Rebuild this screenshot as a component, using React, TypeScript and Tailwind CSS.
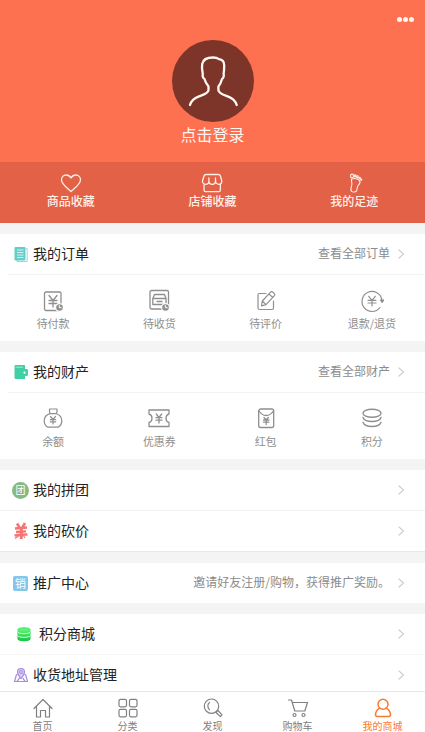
import type { ReactNode } from "react";

const line = { fill: "none", stroke: "currentColor", strokeLinecap: "round", strokeLinejoin: "round" } as const;

function Avatar() {
  return (
    <svg className="w-[82px] h-[82px]" viewBox="0 0 82 82" aria-hidden="true">
      <circle cx="41" cy="41" r="41" fill="#7d3529" />
      <path
        d="M18 65c1-4 4.500-7 9-8.700 4-1.500 9.500-2.700 9.500-6.300v-3.500c-1.500-1.800-3.200-4.500-4-7.500-1.400-.5-2.300-3.500-1.700-5-.8-3.500-1.200-7-.6-10 .8-4.500 5.300-6.500 10.800-6.500 2.300 0 4.500.5 6 1.700 3.300.4 5.200 2.600 5.200 6.100 0 3-.1 6-.6 8.700.7 1.500-.3 4.500-1.600 5-.8 3-2 5.700-3.600 7.500V50c0 3.600 5.300 4.800 9.300 6.300 4.500 1.700 8 4.700 9 8.700"
        {...line}
        stroke="#fff7f2"
        strokeWidth="2.300"
      />
    </svg>
  );
}

function Heart() {
  return (
    <svg className="w-6 h-5" viewBox="0 0 24 20" {...line} strokeWidth="1.300">
      <path d="M12 18.500C8 15 2.500 11.300 2.500 6.800c0-2.800 2-4.800 4.700-4.800 2 0 3.700 1.100 4.800 3 1.100-1.900 2.800-3 4.800-3 2.700 0 4.700 2 4.700 4.800 0 4.500-5.500 8.200-9.500 11.700z" />
    </svg>
  );
}

function Shop() {
  return (
    <svg className="w-6 h-5" viewBox="0 0 24 20" {...line} strokeWidth="1.300">
      <path d="M6 1.500h12.500c1 0 1.600.5 1.900 1.500l1.400 5c0 2-1.300 3.300-3 3.300s-3.300-1.300-3.300-3.300c0 2-1.500 3.300-3.300 3.300S8.900 10 8.900 8c0 2-1.600 3.300-3.300 3.300S2.500 10 2.500 8L4 3c.3-1 1-1.500 2-1.500zM8.900 5v3M15.500 5v3M4 12v5c0 1 .7 1.600 1.600 1.600h13.200c1 0 1.600-.6 1.600-1.600v-5" />
    </svg>
  );
}

function Foot() {
  return (
    <svg className="w-6 h-5" viewBox="0 0 24 20" {...line} strokeWidth="1.100">
      <path d="M9.300 6.200c2.500-1 6-.8 8.300 1.300 1.300 2.200 0 3.500-1.400 5-1.300 1.600-.8 3.300-1.500 5-.7 1.500-3.500 2-5 .9-1.600-1.400-.9-3.200-.2-5 .9-2.400.2-4.700-.2-7.200z" />
      <ellipse cx="10" cy="3" rx="1.500" ry="1.900" />
      <circle cx="13" cy="2.900" r="1" />
      <circle cx="15.400" cy="3.700" r=".9" />
      <circle cx="17.600" cy="5" r=".8" />
      <circle cx="19.200" cy="6.700" r=".6" />
    </svg>
  );
}

function Clock() {
  return (
    <>
      <circle cx="18.500" cy="18.500" r="3.900" fill="#8f8f8f" stroke="#fff" strokeWidth="1.200" />
      <path d="M18.300 16.500v2.200h2" stroke="#fff" strokeWidth="1" />
    </>
  );
}

function WaitPay() {
  return (
    <svg className="w-6 h-6" viewBox="0 0 24 24" {...line} strokeWidth="1.300">
      <rect x="3.500" y="3" width="16.500" height="18.500" rx="1.500" />
      <path d="M8 6.500l4 5 4-5M12 11.500V18M8 11.500h8M8 14.500h8" />
      <Clock />
    </svg>
  );
}

function WaitReceive() {
  return (
    <svg className="w-6 h-6" viewBox="0 0 24 24" {...line} strokeWidth="1.300">
      <rect x="3" y="1.500" width="18.500" height="18.500" rx="1.500" />
      <path d="M7.500 5.500h10l1.500 4v6H5.800v-6zM6 9.500h12.500M10 12.500h5" />
      <Clock />
    </svg>
  );
}

function Review() {
  return (
    <svg className="w-6 h-6" viewBox="0 0 24 24" {...line} strokeWidth="1.200">
      <path d="M12 4.500H5.500c-1 0-1.500.6-1.500 1.500v13c0 1 .6 1.500 1.500 1.500h12.500c1 0 1.500-.6 1.500-1.500v-7" />
      <path d="M8.300 12l8-8.600c.8-.8 1.800-.8 2.600-.1l1.300 1.100c.8.8.8 1.700 0 2.500l-8.200 8.700-4.500 1.200zM15 5l3.700 3.400M8.300 12l3.700 3.600" />
    </svg>
  );
}

function Refund() {
  return (
    <svg className="w-6 h-6" viewBox="0 0 24 24" {...line} strokeWidth="1.200">
      <path d="M20 18.500A10 10 0 1 1 21.900 11" />
      <path d="M20.500 11h3.300l-1.700 2.300z" fill="currentColor" />
      <path d="M8.700 7.300l3.300 4 3.300-4M12 11.300v5.700M8 11.300h8M8 14h8" />
    </svg>
  );
}

function MoneyBag() {
  return (
    <svg className="w-6 h-6" viewBox="0 0 24 24" {...line} strokeWidth="1.200">
      <path d="M8.500 2h7.500v2.500l-.7 2.200c3.200 1 5.500 3.700 5.500 7.200 0 2.700-1.300 4.800-3.200 6.200H6.500c-2-1.400-3.300-3.500-3.300-6.200 0-3.500 2.300-6.200 5.800-7.200l-.5-2.200zM9 6.700h6.300" />
      <path d="M9.500 9.500l2.500 3 2.500-3M12 12.500V17M9.300 12.700h5.400M9.300 14.800h5.400" />
    </svg>
  );
}

function Coupon() {
  return (
    <svg className="w-6 h-6" viewBox="0 0 24 24" {...line} strokeWidth="1.300">
      <path d="M2 3h20v4c-2 .5-3 2.500-3 4.300s1 3.700 3 4.200V19.500H2v-4c2-.5 3-2.400 3-4.200S4 7.500 2 7z" />
      <path d="M9.300 7l2.700 3.500L14.700 7M12 10.500V16M9 10.700h6M9 13.200h6" />
    </svg>
  );
}

function RedPacket() {
  return (
    <svg className="w-6 h-6" viewBox="0 0 24 24" {...line} strokeWidth="1.300">
      <rect x="4.700" y="2" width="15" height="18.500" rx="2" />
      <path d="M5 4c2 3 4.500 4.500 7.200 4.500S17.500 7 19.500 4" />
      <path d="M10 10.500l2.200 2.200 2.200-2.200M12.200 12.700v4.800M9.500 13h5.400M9.500 15.200h5.400" />
    </svg>
  );
}

function Points() {
  return (
    <svg className="w-6 h-6" viewBox="0 0 24 24" {...line} strokeWidth="1.400">
      <ellipse cx="12" cy="6.300" rx="9" ry="4" />
      <path d="M3 10.500c.8 2.400 4.500 4 9 4s8.200-1.600 9-4M3 15.300c.8 2.400 4.500 4.200 9 4.200s8.200-1.800 9-4.200" />
    </svg>
  );
}

function OrderIcon() {
  return (
    <svg className="w-4 h-4" viewBox="0 0 16 16" fill="none">
      <path d="M13 2.500h1.200v13H4V14" stroke="#8fdcd8" />
      <rect x="1.500" y="1" width="11" height="13.500" rx="1" fill="#64cdc8" />
      <path d="M4 4h6.500M4 6.500h6.500M4 9h6.500M4 11.500h6.500" stroke="#d3f4f1" />
    </svg>
  );
}

function WalletIcon() {
  return (
    <svg className="w-4 h-4" viewBox="0 0 16 16" fill="#41cfa6">
      <path d="M2.500 1H11c.8 0 1 .4 1 1v3h1.500c.8 0 1.500.6 1.500 1.500v4c0 .9-.7 1.500-1.500 1.500H12v3H3c-1 0-1.500-.6-1.500-1.500v-11C1.500 1.600 1.800 1 2.500 1z" />
      <path d="M2.500 3.200H10" stroke="#a5ecd7" />
      <circle cx="11.500" cy="8.700" r="1.100" fill="#fff" />
    </svg>
  );
}

function BargainIcon() {
  return (
    <svg className="w-4 h-[18px]" viewBox="0 0 16 18" fill="none" stroke="#f67474">
      <path d="M4 1.500l2.500 4M12 1l-2.800 5" strokeWidth="2.600" />
      <path d="M2 6.500l12-1M3 10l10-.6M1.500 13.500l8-.8 5-.2" strokeWidth="2.300" />
      <path d="M8.300 6v11" strokeWidth="3" />
      <path d="M2 16.500l4-3M10 13l2 3" strokeWidth="1.200" />
    </svg>
  );
}

function CoinsIcon() {
  return (
    <svg className="w-4 h-4" viewBox="0 0 16 16">
      <path d="M1.500 9.500V13c0 3 13 3 13 0V9.500z" fill="#22c94e" />
      <path d="M1.500 6v3.500c0 3 13 3 13 0V6z" fill="#37dc58" />
      <path d="M1.500 3v3c0 3 13 3 13 0V3z" fill="#4be866" />
      <ellipse cx="8" cy="3.200" rx="6.500" ry="2.200" fill="#5cf077" />
      <path d="M1.500 5.700c1 2.700 12 2.700 13 0M1.500 9.400c1 2.700 12 2.700 13 0" stroke="#d2ffd9" fill="none" />
    </svg>
  );
}

function AddressIcon() {
  return (
    <svg className="w-4 h-4" viewBox="0 0 16 16" {...line} stroke="#a78de0" strokeWidth="1.200">
      <path d="M4.200 7.500H3.500L1.500 14.500h13l-2-7h-.8M4 14.300l3-4M12 14.300l-2-3" />
      <path d="M8 11.500C6 9 4.500 7.300 4.500 5a3.500 3.500 0 0 1 7 0c0 2.300-1.500 4-3.500 6.500z" fill="#d9cdf4" />
      <circle cx="8" cy="5" r="1.300" fill="#fff" />
    </svg>
  );
}

function HomeIcon() {
  return (
    <svg className="w-6 h-5" viewBox="0 0 24 20" {...line} strokeWidth="1.200">
      <path d="M3 10.500l9-9 9 9M5.500 8.500v10.500H9.500V12.500h5V19h4V8.500" />
    </svg>
  );
}

function CategoryIcon() {
  return (
    <svg className="w-6 h-5" viewBox="0 0 24 20" {...line} strokeWidth="1.200">
      <rect x="3" y="1.300" width="7.500" height="7.500" rx="1.500" />
      <rect x="13.500" y="1.300" width="7.500" height="7.500" rx="1.500" />
      <rect x="3" y="11.300" width="7.500" height="7.500" rx="1.500" />
      <rect x="13.500" y="11.300" width="7.500" height="7.500" rx="1.500" />
    </svg>
  );
}

function DiscoverIcon() {
  return (
    <svg className="w-6 h-5" viewBox="0 0 24 20" {...line} strokeWidth="1.200">
      <circle cx="10.500" cy="8.200" r="7.200" />
      <path d="M8.500 4.500c-2.200 1.500-2.200 5.500 0 7.200M15.800 13.200l1.200-.7 4 4.300-1.700 1.900-4.200-4.200z" />
    </svg>
  );
}

function CartIcon() {
  return (
    <svg className="w-6 h-5" viewBox="0 0 24 20" {...line} strokeWidth="1.200">
      <path d="M2.500 2h3l3.300 11h10l2.700-8.500H6.300" />
      <circle cx="8.500" cy="17" r="1.500" />
      <circle cx="17.500" cy="17" r="1.500" />
    </svg>
  );
}

function MeIcon() {
  return (
    <svg className="w-6 h-5" viewBox="0 0 24 20" {...line} strokeWidth="1.500">
      <circle cx="12" cy="6.200" r="5" />
      <path d="M8.500 10.200C6 11.800 4.700 14 4.500 16.500c0 1.200.6 2 1.800 2h11.400c1.200 0 1.800-.8 1.800-2-.2-2.500-1.500-4.700-4-6.300" />
    </svg>
  );
}

function Arrow() {
  return (
    <svg className="w-3 h-3" viewBox="0 0 12 12" {...line} stroke="#cfcfcf" strokeWidth="1.200">
      <path d="M4 2l4.500 4L4 10" />
    </svg>
  );
}

type RowProps = { icon: ReactNode; title: string; note?: string; wide?: boolean };

function Row({ icon, title, note, wide }: RowProps) {
  return (
    <a href="#" className="box-content flex items-center h-10 pl-3 pr-[18px]">
      <span className={wide ? "flex justify-center w-[23px] mr-1" : "flex justify-center w-[17px] mr-1"}>{icon}</span>
      <span className="pb-[2px] text-sm text-[#222]">{title}</span>
      <span className="ml-auto mr-[5px] pb-[2px] text-xs text-[#8c8c8c]">{note}</span>
      <Arrow />
    </a>
  );
}

function Grid({ items }: { items: { label: string; icon: ReactNode }[] }) {
  return (
    <>
      <hr className="ml-2 border-[#f3f3f3]" />
      <div className="grid grid-cols-4 text-[#8f8f8f]">
        {items.map((item) => (
          <a href="#" key={item.label} className="flex flex-col items-center h-[66px] pt-[14px]">
            {item.icon}
            <span className="mt-[2px] text-[11px] leading-4">{item.label}</span>
          </a>
        ))}
      </div>
    </>
  );
}

const favorites = [
  { label: "商品收藏", icon: <Heart /> },
  { label: "店铺收藏", icon: <Shop /> },
  { label: "我的足迹", icon: <Foot /> },
];

const orders = [
  { label: "待付款", icon: <WaitPay /> },
  { label: "待收货", icon: <WaitReceive /> },
  { label: "待评价", icon: <Review /> },
  { label: "退款/退货", icon: <Refund /> },
];

const assets = [
  { label: "余额", icon: <MoneyBag /> },
  { label: "优惠券", icon: <Coupon /> },
  { label: "红包", icon: <RedPacket /> },
  { label: "积分", icon: <Points /> },
];

const tabs = [
  { label: "首页", icon: <HomeIcon /> },
  { label: "分类", icon: <CategoryIcon /> },
  { label: "发现", icon: <DiscoverIcon /> },
  { label: "购物车", icon: <CartIcon /> },
  { label: "我的商城", icon: <MeIcon />, active: true },
];

export default function App() {
  return (
    <div className="flex flex-col h-dvh bg-[#f4f4f4] font-['Noto_Sans_CJK_SC',sans-serif]">
      <main className="flex-1 min-h-0 overflow-y-auto [scrollbar-width:none]">
        <header className="relative flex flex-col items-center h-[162px] pt-10 bg-[#fd7050] text-[#fff7f2]">
          <button type="button" aria-label="更多" className="absolute right-[11px] top-4 flex gap-px py-[1px]">
            <span className="w-[5px] h-[5px] rounded-full bg-[#fff7f2]" />
            <span className="w-[5px] h-[5px] rounded-full bg-[#fff7f2]" />
            <span className="w-[5px] h-[5px] rounded-full bg-[#fff7f2]" />
          </button>
          <button type="button" className="flex flex-col items-center">
            <Avatar />
            <span className="text-base leading-6">点击登录</span>
          </button>
        </header>
        <div className="grid grid-cols-3 h-[61px] pt-[11px] bg-[#e26147] text-[#fff0e8]">
          {favorites.map((item) => (
            <a href="#" key={item.label} className="flex flex-col items-center">
              {item.icon}
              <span className="text-xs leading-4 font-medium">{item.label}</span>
            </a>
          ))}
        </div>

        <div className="flex flex-col gap-[11px] pt-[11px]">
          <section className="bg-white">
            <Row icon={<OrderIcon />} title="我的订单" note="查看全部订单" />
            <Grid items={orders} />
          </section>
          <section className="bg-white">
            <Row icon={<WalletIcon />} title="我的财产" note="查看全部财产" />
            <Grid items={assets} />
          </section>
          <section className="bg-white border-b border-[#e8e8e8] divide-y divide-[#f3f3f3]">
            <Row
              icon={
                <span className="flex items-center justify-center w-[17px] h-[17px] rounded-full bg-[#86b983] text-[10px] leading-none text-white">
                  团
                </span>
              }
              title="我的拼团"
            />
            <Row icon={<BargainIcon />} title="我的砍价" />
          </section>
          <section className="bg-white">
            <Row
              icon={
                <span className="flex items-center justify-center w-[15px] h-[15px] rounded-xs bg-[#86c5ea] text-[11px] leading-none text-white">
                  销
                </span>
              }
              title="推广中心"
              note="邀请好友注册/购物，获得推广奖励。"
            />
          </section>
          <section className="bg-white divide-y divide-[#f7f7f7]">
            <Row icon={<CoinsIcon />} title="积分商城" wide />
            <Row icon={<AddressIcon />} title="收货地址管理" />
          </section>
        </div>
      </main>

      <nav className="grid grid-cols-5 h-[41px] pt-[6px] border-t border-[#e6e6e6] bg-white">
        {tabs.map((tab) => (
          <a
            href="#"
            key={tab.label}
            className={tab.active ? "flex flex-col items-center text-[#fa7a32]" : "flex flex-col items-center text-[#808080]"}
          >
            {tab.icon}
            <span className="text-[10px] leading-4">{tab.label}</span>
          </a>
        ))}
      </nav>
    </div>
  );
}
